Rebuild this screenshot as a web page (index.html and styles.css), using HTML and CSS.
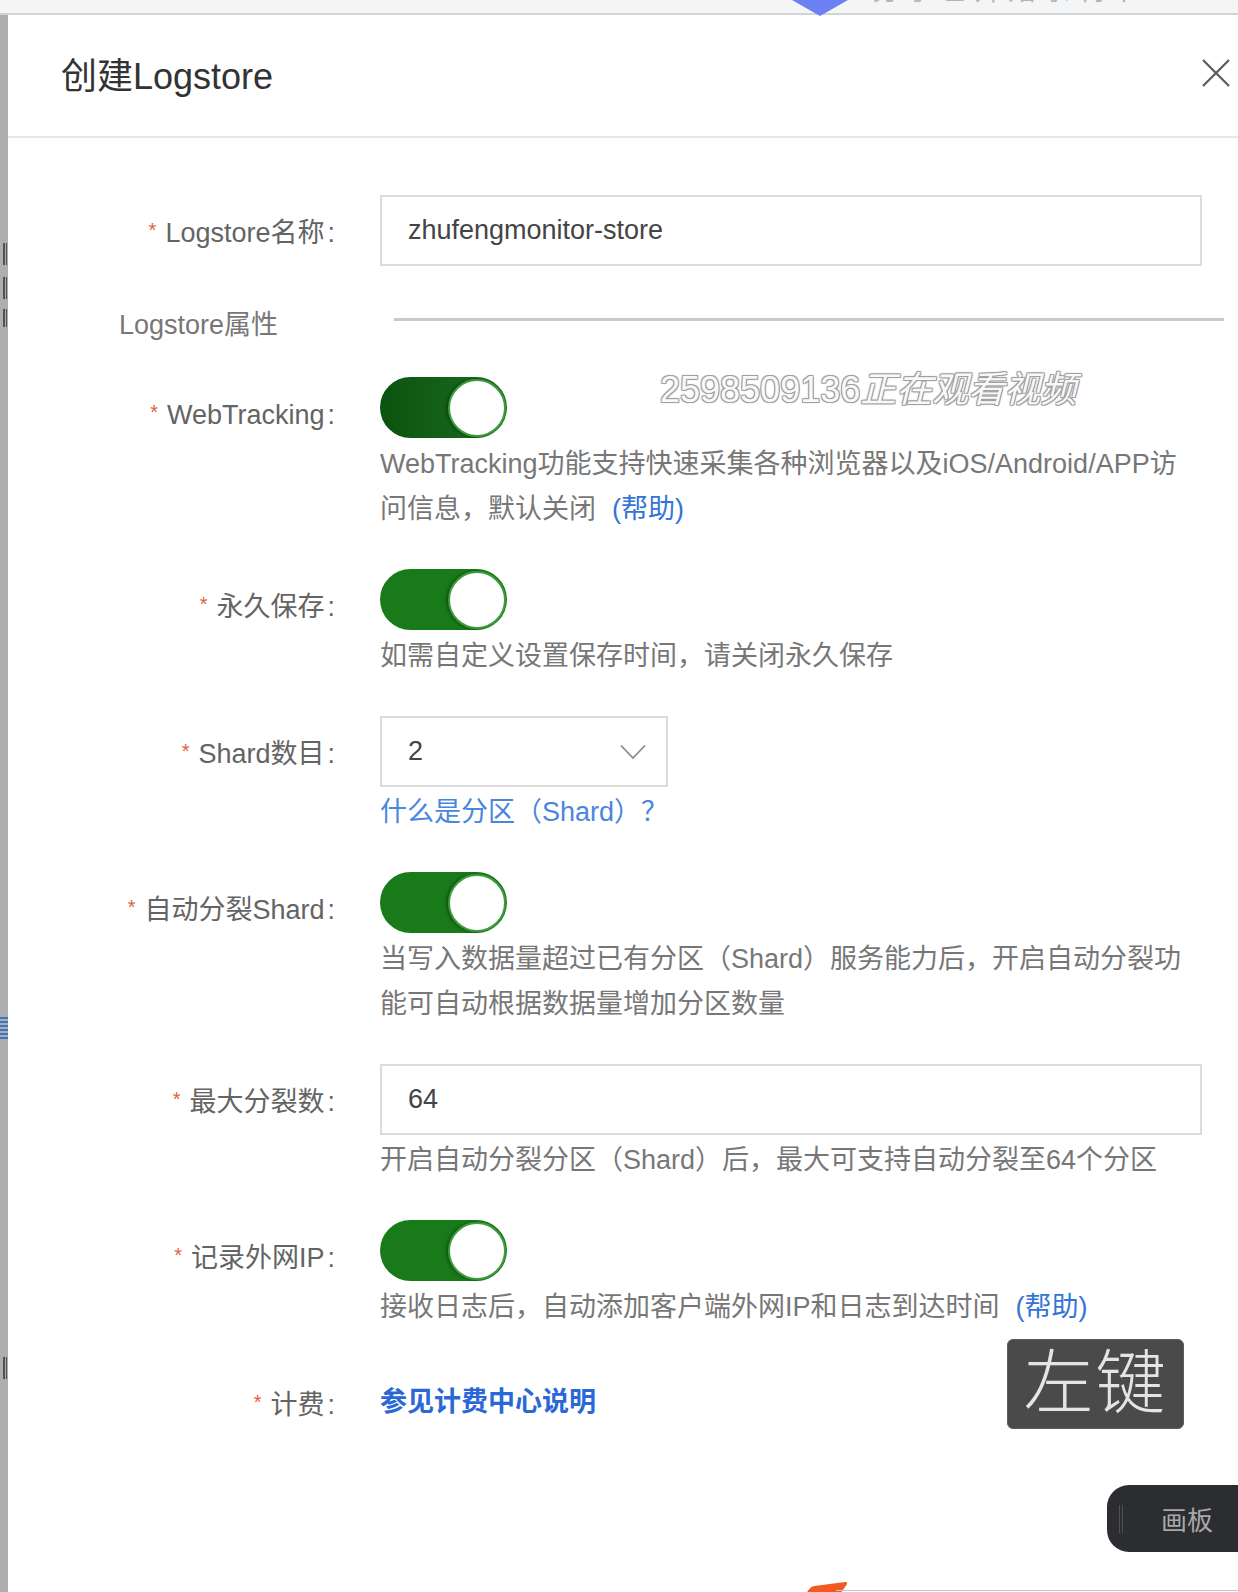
FILE: index.html
```html
<!DOCTYPE html>
<html lang="zh-CN">
<head>
<meta charset="utf-8">
<title>创建Logstore</title>
<link rel="stylesheet" href="styles.css">
</head>
<body>
<div class="topbar"></div>
<div class="stage">
  <div class="side">
    <span class="side-mark side-mark1"></span>
    <span class="side-mark side-mark2"></span>
    <span class="side-mark side-mark3"></span>
    <span class="side-blue"></span>
    <span class="side-mark side-mark4"></span>
  </div>
  <div class="modal">
    <div class="modal-head">
      <h2 class="modal-title">创建Logstore</h2>
      <svg class="close" width="30" height="30" viewBox="0 0 30 30" aria-label="关闭">
        <path d="M2 2 L28 28 M28 2 L2 28" stroke="#5a5a5a" stroke-width="2.2" fill="none"/>
      </svg>
    </div>
    <div class="form">
      <div class="row">
        <div class="label"><span class="req">*</span>Logstore名称<span class="colon">:</span></div>
        <div class="ctrl"><div class="input">zhufengmonitor-store</div></div>
      </div>
      <div class="row section">
        <div class="section-label">Logstore属性</div>
        <div class="section-line"></div>
      </div>
      <div class="row">
        <div class="label"><span class="req">*</span>WebTracking<span class="colon">:</span></div>
        <div class="ctrl">
          <div class="switch switch-dark"><span class="knob"></span></div>
          <p class="help">WebTracking功能支持快速采集各种浏览器以及iOS/Android/APP访问信息，默认关闭<span class="link">(帮助)</span></p>
        </div>
      </div>
      <div class="row">
        <div class="label"><span class="req">*</span>永久保存<span class="colon">:</span></div>
        <div class="ctrl">
          <div class="switch"><span class="knob"></span></div>
          <p class="help">如需自定义设置保存时间，请关闭永久保存</p>
        </div>
      </div>
      <div class="row">
        <div class="label"><span class="req">*</span>Shard数目<span class="colon">:</span></div>
        <div class="ctrl">
          <div class="input select"><span>2</span>
            <svg width="26" height="16" viewBox="0 0 26 16"><polyline points="1,1.5 13,14 25,1.5" fill="none" stroke="#8a8a8a" stroke-width="1.8"/></svg>
          </div>
          <p class="help link-light">什么是分区（Shard）？</p>
        </div>
      </div>
      <div class="row">
        <div class="label"><span class="req">*</span>自动分裂Shard<span class="colon">:</span></div>
        <div class="ctrl">
          <div class="switch"><span class="knob"></span></div>
          <p class="help">当写入数据量超过已有分区（Shard）服务能力后，开启自动分裂功能可自动根据数据量增加分区数量</p>
        </div>
      </div>
      <div class="row">
        <div class="label"><span class="req">*</span>最大分裂数<span class="colon">:</span></div>
        <div class="ctrl">
          <div class="input">64</div>
          <p class="help">开启自动分裂分区（Shard）后，最大可支持自动分裂至64个分区</p>
        </div>
      </div>
      <div class="row">
        <div class="label"><span class="req">*</span>记录外网IP<span class="colon">:</span></div>
        <div class="ctrl">
          <div class="switch"><span class="knob"></span></div>
          <p class="help">接收日志后，自动添加客户端外网IP和日志到达时间<span class="link">(帮助)</span></p>
        </div>
      </div>
      <div class="row row-last">
        <div class="label"><span class="req">*</span>计费<span class="colon">:</span></div>
        <div class="ctrl"><span class="bill-link">参见计费中心说明</span></div>
      </div>
    </div>
  </div>
</div>

<span class="top-tri"></span>
<span class="top-ghost">分享已开始录制中</span>
<div class="watermark">2598509136<span class="wm-cjk">正在观看视频</span></div>
<div class="keycap">左键</div>
<div class="palette"><span class="grip"></span><span class="palette-text">画板</span></div>
<span class="orange-tip"></span>
<span class="bottom-line"></span>
</body>
</html>
```
FILE: styles.css
```css
* { box-sizing: border-box; }
html, body { margin: 0; }
body {
  width: 1238px;
  height: 1592px;
  overflow: hidden;
  position: relative;
  background: #fff;
  font-family: "Liberation Sans", "Noto Sans CJK SC", sans-serif;
}
.topbar {
  height: 15px;
  background: #f4f5f7;
  border-bottom: 2px solid #d3d3d3;
}
.stage {
  display: flex;
  height: 1577px;
}
.side {
  width: 8px;
  flex: none;
  background: #aeaeae;
  overflow: hidden;
  display: flex;
  flex-direction: column;
  align-items: flex-end;
}
.side-mark {
  width: 6px;
  height: 22px;
  background: linear-gradient(90deg, #aeaeae 0 20%, #3a3a3a 20% 45%, #aeaeae 45% 60%, #3a3a3a 60% 90%, #aeaeae 90%);
  opacity: 0.8;
}
.side-mark1 { margin-top: 228px; }
.side-mark2 { margin-top: 12px; }
.side-mark3 { margin-top: 10px; height: 18px; }
.side-blue {
  width: 8px;
  height: 22px;
  margin-top: 690px;
  background: repeating-linear-gradient(180deg, #3a76c4 0 2px, #aeaeae 2px 4px);
}
.side-mark4 { margin-top: 318px; }
.modal {
  flex: 1;
  background: #fff;
}
.modal-head {
  height: 123px;
  border-bottom: 2px solid #e7e7e7;
  display: flex;
  align-items: center;
  justify-content: space-between;
  padding: 0 7px 5px 53px;
}
.modal-title {
  margin: 0;
  font-size: 36px;
  font-weight: normal;
  color: #333;
}
.form {
  padding-top: 57px;
}
.row {
  display: grid;
  grid-template-columns: 327px 822px;
  column-gap: 45px;
  margin-bottom: 37px;
}
.row-last { margin-top: 3px; }
.label {
  line-height: 71px;
  text-align: right;
  font-size: 27px;
  color: #646464;
  white-space: nowrap;
}
.req {
  color: #e2603d;
  font-size: 20px;
  vertical-align: 5px;
  margin-right: 9px;
}
.colon { margin-left: 3px; }
.input {
  height: 71px;
  border: 2px solid #dcdcdc;
  display: flex;
  align-items: center;
  padding-left: 26px;
  font-size: 27px;
  color: #444;
}
.select {
  width: 288px;
  justify-content: space-between;
  padding-right: 20px;
}
.help {
  margin: 3px 0 0;
  font-size: 27px;
  line-height: 45px;
  color: #777;
}
.link { color: #3474d6; margin-left: 16px; }
.link-light { color: #4a86dc; }
.switch {
  width: 127px;
  height: 61px;
  border-radius: 31px;
  background: #187a18;
  display: flex;
  justify-content: flex-end;
  align-items: center;
  padding-right: 1px;
  margin-bottom: 4px;
}
.switch-dark {
  background: linear-gradient(90deg, #0b5310, #1b6e20);
}
.knob {
  width: 58px;
  height: 58px;
  border-radius: 50%;
  background: #fff;
  border: 2px solid #3e9b3e;
  box-shadow: -2px 0 3px rgba(0, 0, 0, 0.3);
}
.row.section {
  height: 38px;
  align-items: center;
  margin-bottom: 33px;
}
.section-label {
  padding-left: 111px;
  font-size: 27px;
  line-height: 38px;
  color: #777;
  white-space: nowrap;
}
.section-line {
  height: 3px;
  background: #cacaca;
  margin: 0 -22px 12px 14px;
}
.bill-link {
  display: block;
  line-height: 71px;
  font-size: 27px;
  font-weight: bold;
  color: #2a68d8;
}

/* overlays */
.top-tri {
  position: absolute;
  left: 792px;
  top: 0;
  width: 0;
  height: 0;
  border-left: 28px solid transparent;
  border-right: 28px solid transparent;
  border-top: 16px solid #6b80f4;
}
.top-ghost {
  position: absolute;
  left: 872px;
  top: -24px;
  font-size: 28px;
  line-height: 30px;
  color: #b5b5b5;
  letter-spacing: 6px;
}
.watermark {
  position: absolute;
  left: 660px;
  top: 368px;
  font-size: 36px;
  line-height: 44px;
  color: rgba(255, 255, 255, 0.95);
  text-shadow: 1px 1px 0 #a0a0a0, -1px -1px 0 #a0a0a0, 1px -1px 0 #a0a0a0, -1px 1px 0 #a0a0a0, 0 0 3px #bbb;
  white-space: nowrap;
}
.wm-cjk { font-style: italic; }
.keycap {
  position: absolute;
  left: 1007px;
  top: 1339px;
  width: 177px;
  height: 90px;
  border-radius: 6px;
  background: #4a4a4a;
  border: 1px solid #5e5e5e;
  color: #e4e4e4;
  font-size: 70px;
  font-weight: 300;
  line-height: 88px;
  text-align: center;
  letter-spacing: 2px;
}
.palette {
  position: absolute;
  left: 1107px;
  top: 1485px;
  width: 150px;
  height: 67px;
  border-radius: 22px 0 0 22px;
  background: #2b2d31;
  display: flex;
  align-items: center;
  padding-left: 12px;
}
.grip {
  width: 4px;
  height: 28px;
  border-left: 1px solid #4e5054;
  border-right: 1px solid #4e5054;
}
.palette-text {
  margin-left: 38px;
  font-size: 26px;
  color: #a8a8a8;
}
.orange-tip {
  position: absolute;
  left: 808px;
  top: 1584px;
  width: 34px;
  height: 14px;
  background: #f25a23;
  transform: skewX(-40deg) rotate(-8deg);
  border-radius: 3px;
}
.bottom-line {
  position: absolute;
  left: 836px;
  right: 0;
  bottom: 1px;
  height: 1px;
  background: #c8c8c8;
}
```
